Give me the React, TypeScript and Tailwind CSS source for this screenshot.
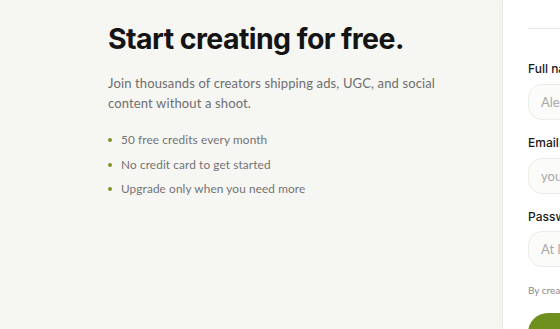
export default function App() {
  const perks = [
    "50 free credits every month",
    "No credit card to get started",
    "Upgrade only when you need more",
  ]

  const inputClass =
    "h-[36px] w-[360px] rounded-[14px] border border-[#ebebe7] bg-[#fbfbf9] px-[12px] font-['Lato',sans-serif] text-[13px] text-[#1a1a1a] placeholder:text-[#a8a8a8] focus:outline-none"

  return (
    <div className="flex h-[329px] w-[560px] overflow-hidden bg-[#f6f6f3] font-['Inter',sans-serif]">
      {/* Left: pitch */}
      <div className="w-[502px] shrink-0 pl-[108px] pt-[22px]">
        <h1 className="text-[28.5px] font-bold leading-[34px] tracking-[-0.02em] text-[#141414]">
          Start creating for free.
        </h1>
        <p className="mt-[17px] w-[340px] font-['Lato',sans-serif] text-[13px] leading-[20px] tracking-[0.01em] text-[#6e6e6e]">
          Join thousands of creators shipping ads, UGC, and social content without a shoot.
        </p>
        <ul className="mt-[18px] flex flex-col gap-[6.5px] font-['Lato',sans-serif]">
          {perks.map((perk) => (
            <li key={perk} className="flex items-center gap-[9px] text-[11.8px] leading-[18px] tracking-[0.01em] text-[#737373]">
              <span className="h-[4px] w-[4px] rounded-full bg-[#7a9626]" />
              {perk}
            </li>
          ))}
        </ul>
      </div>

      {/* Right: signup form */}
      <div className="w-[420px] shrink-0 border-l border-[#ececea] bg-white pl-[25px] shadow-[-4px_0_8px_rgba(0,0,0,0.02)]">
        <div className="h-[29px] border-b border-[#e6e6e3]" />
        <form className="mt-[32px] flex flex-col">
          <label className="text-[12px] font-medium leading-[16px] text-[#1a1a1a]">Full name</label>
          <input placeholder="Alex Morgan" className={`mt-[7px] ${inputClass}`} />
          <label className="mt-[15px] text-[12px] font-medium leading-[16px] text-[#1a1a1a]">Email</label>
          <input placeholder="you@example.com" className={`mt-[7px] ${inputClass}`} />
          <label className="mt-[15px] text-[12px] font-medium leading-[16px] text-[#1a1a1a]">Password</label>
          <input type="password" placeholder="At least 8 characters" className={`mt-[6px] ${inputClass}`} />
          <p className="mt-[16px] font-['Lato',sans-serif] text-[10px] leading-[14px] text-[#8a8a8a]">
            By creating an account you agree to our Terms and Privacy Policy.
          </p>
          <button
            type="submit"
            className="mt-[16px] h-[40px] w-[360px] shrink-0 rounded-[20px] bg-[#6f8f1f] text-[13px] font-semibold text-white"
          >
            Create account
          </button>
        </form>
      </div>
    </div>
  )
}
